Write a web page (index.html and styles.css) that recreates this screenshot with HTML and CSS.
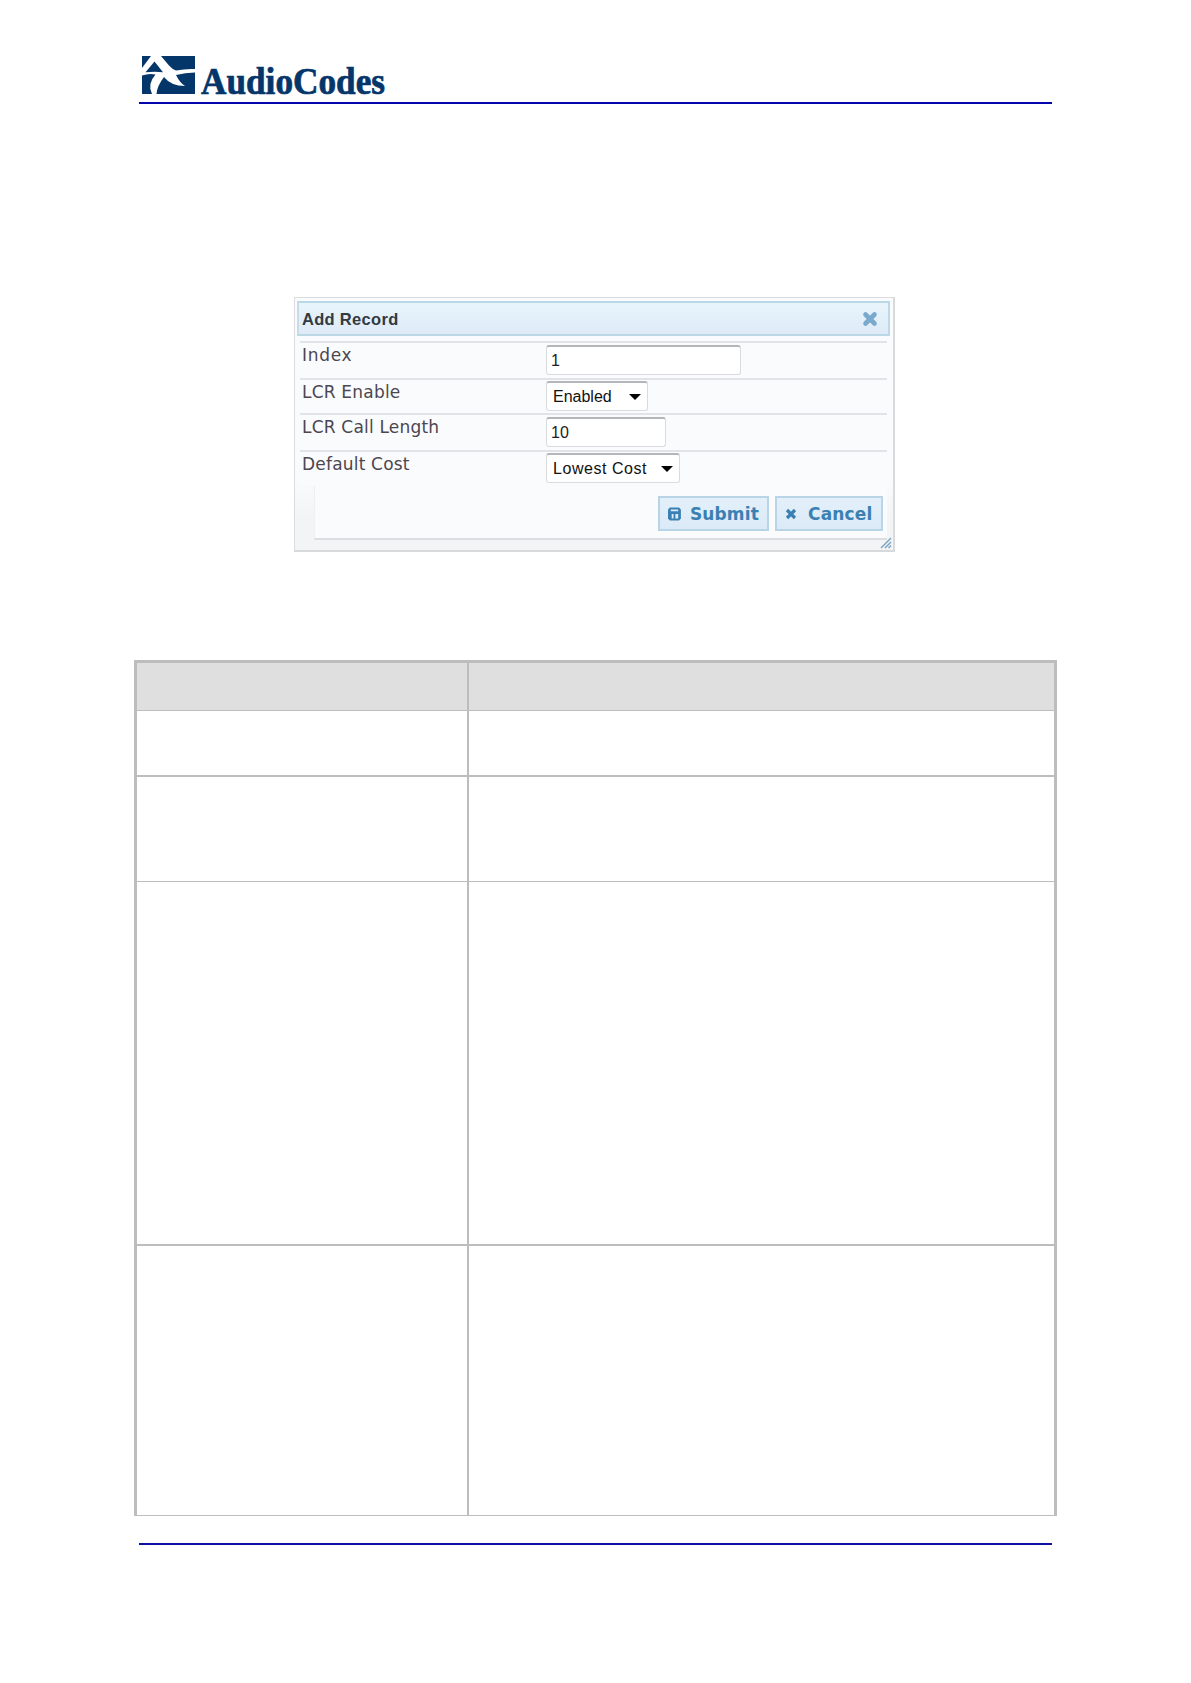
FILE: index.html
```html
<!DOCTYPE html>
<html lang="en">
<head>
<meta charset="utf-8">
<title>AudioCodes - Add Record</title>
<link rel="stylesheet" href="styles.css">
</head>
<body>
<header class="page-header">
  <svg class="logo" width="260" height="46" viewBox="0 0 260 46" role="img" aria-label="AudioCodes">
    <g fill="#05366a">
      <path d="M3 0H12L3 12Z"/>
      <path d="M15.500 5.500L6.500 16.300Q16 15 24 16.300Z"/>
      <path d="M22 0H56V13Q47 12.500 37 14.500Q33 13 30 9.500Z"/>
      <path d="M3 19.500Q10 17 16.500 18.500Q8 28 13 38H3Z"/>
      <path d="M25 21Q32 30 46 30Q41 27 37 19Q46 16.500 56 16.500V38H17.500Q18 30 25 21Z"/>
    </g>
    <text class="logo-text" x="62" y="38" textLength="184" lengthAdjust="spacingAndGlyphs">AudioCodes</text>
  </svg>
</header>
<main>
  <section class="dialog">
    <div class="title-bar">
      <h1 class="title">Add Record</h1>
      <svg class="close" width="16" height="16" viewBox="0 0 16 16"><path d="M3.500 3.500L12.500 12.500M12.500 3.500L3.500 12.500" stroke="#79a9cc" stroke-width="4.600" stroke-linecap="round"/></svg>
    </div>
    <div class="fields">
      <div class="field field-index"><label class="label">Index</label><div class="box box-index">1</div></div>
      <div class="field field-enable"><label class="label">LCR Enable</label><div class="box select box-enable"><span class="enabled">Enabled</span><i class="arrow"></i></div></div>
      <div class="field field-length"><label class="label">LCR Call Length</label><div class="box box-length">10</div></div>
      <div class="field field-cost"><label class="label">Default Cost</label><div class="box select box-cost"><span class="lowest">Lowest Cost</span><i class="arrow"></i></div></div>
    </div>
    <div class="actions">
      <button class="button submit"><svg width="14" height="14" viewBox="0 0 14 14"><path d="M2 0H12L14 2V12L12 14H2L0 12V2Z" fill="#3b80b3"/><path d="M3 2H11V4H3ZM4 7H6V12H4ZM8 7H11V12H8Z" fill="#dcecf8"/></svg><span>Submit</span></button>
      <button class="button cancel"><svg width="12" height="12" viewBox="0 0 12 12"><path d="M2 2L10 10M10 2L2 10" stroke="#3b80b3" stroke-width="3.200"/></svg><span>Cancel</span></button>
    </div>
    <svg class="grip" width="12" height="12" viewBox="0 0 12 12"><path d="M1 11L11 1M5 11L11 5M8.500 11L11 8.500" stroke="#7fa6c4" stroke-width="1.500"/></svg>
  </section>
  <table class="parameters">
    <colgroup><col class="col-name"><col class="col-text"></colgroup>
    <tr class="head"><th></th><th></th></tr>
    <tr class="row-a"><td></td><td></td></tr>
    <tr class="row-b"><td></td><td></td></tr>
    <tr class="row-c"><td></td><td></td></tr>
    <tr class="row-d"><td></td><td></td></tr>
  </table>
</main>
<footer class="page-footer"></footer>
</body>
</html>
```
FILE: styles.css
```css
* { box-sizing: border-box; }
body { margin: 0; min-height: 1683px; background: #fff; font-family: "DejaVu Sans", sans-serif; }
.page-header { height: 104px; margin: 0 139px; padding-top: 56px; border-bottom: 2px solid #0505ae; }
.logo { display: block; overflow: visible; }
.logo-text { font: bold 37px "Liberation Serif", serif; fill: #05366a; stroke: #05366a; stroke-width: .7px; }
.dialog {
  position: relative;
  width: 601px; height: 255px; margin: 193px 0 0 294px; padding: 3px 4px 0 2px;
  border: 1px solid #dcdcdf; border-right: 2px solid #dadadc; border-bottom: 2px solid #d8d9db;
  background: linear-gradient(#fafbfd 0, #fafbfd 180px, #f3f4f5 220px, #f3f4f5 100%);
}
.title-bar {
  display: flex; align-items: center; justify-content: space-between;
  width: 593px; height: 35px; padding: 0 10px 0 3px;
  border: 2px solid #bbd8e6; border-left-color: #c7dce8;
  background: linear-gradient(#e9f4fb, #deebf7);
}
.title { margin: 1px 0 0; font: bold 16.500px/20px "Liberation Sans", sans-serif; letter-spacing: .3px; color: #333a42; }
.fields { margin: 5px 0 0 3px; width: 587px; background: #fafbfd; }
.field { display: flex; border-top: 2px solid #e1e3e6; }
.field-index { height: 37px; }
.field-enable { height: 35px; }
.field-length { height: 37px; }
.field-cost { height: 35px; }
.label { width: 246px; padding: 2px 0 0 2px; font-size: 17px; line-height: 20px; letter-spacing: .2px; color: #4c4650; white-space: nowrap; }
.field-index .label { letter-spacing: .7px; }
.box {
  display: flex; align-items: center; height: 30px; margin-top: 2px; padding: 0 6px 0 4px;
  border: 1px solid #d9dbde; border-top: 2px solid #b5b6b8; border-radius: 3px; background: #fff;
  font: 16px/20px "Liberation Sans", sans-serif; color: #222;
}
.box-index { width: 195px; }
.box-enable { width: 102px; margin-top: 1px; }
.box-length { width: 120px; }
.box-cost { width: 134px; margin-top: 1px; }
.select { justify-content: space-between; padding-left: 6px; color: #111; }
.lowest { letter-spacing: .55px; white-space: nowrap; }
.arrow { border: 6px solid transparent; border-top-color: #000; border-bottom: 0; }
.actions {
  display: flex; justify-content: flex-end; gap: 6px;
  width: 573px; height: 54px; margin: 1px 0 0 17px; padding: 10px 4px 0 0;
  border-left: 1px solid #eff0f2; border-bottom: 2px solid #dbdde0; background: #fafbfd;
}
.button {
  display: flex; align-items: center; height: 35px; padding: 0 8px;
  border: 2px solid #b9d3e7; background: linear-gradient(#e3f0fa, #dbeaf7);
  font: bold 17px/20px "DejaVu Sans", sans-serif; letter-spacing: .15px; color: #3b80b3;
}
.submit { width: 111px; gap: 9px; }
.cancel { width: 108px; gap: 11px; }
.grip { position: absolute; right: 1px; bottom: 1px; }
.parameters {
  width: 923px; margin: 108px 0 0 134px; border-spacing: 0; table-layout: fixed;
  border: 3px solid #bdbdbd; border-bottom: 0;
}
.col-name { width: 332px; }
.parameters th, .parameters td { padding: 0; border-bottom: 1px solid #bdbdbd; }
.parameters th:first-child, .parameters td:first-child { border-right: 2px solid #bdbdbd; }
.head { height: 48px; background: #dfdfdf; }
.row-a { height: 66px; }
.row-b { height: 105px; }
.row-c { height: 364px; }
.row-d { height: 270px; }
.row-a td, .row-c td { border-bottom-width: 2px; }
.page-footer { height: 2px; margin: 27px 139px 0; background: #0f0fa6; }
```
